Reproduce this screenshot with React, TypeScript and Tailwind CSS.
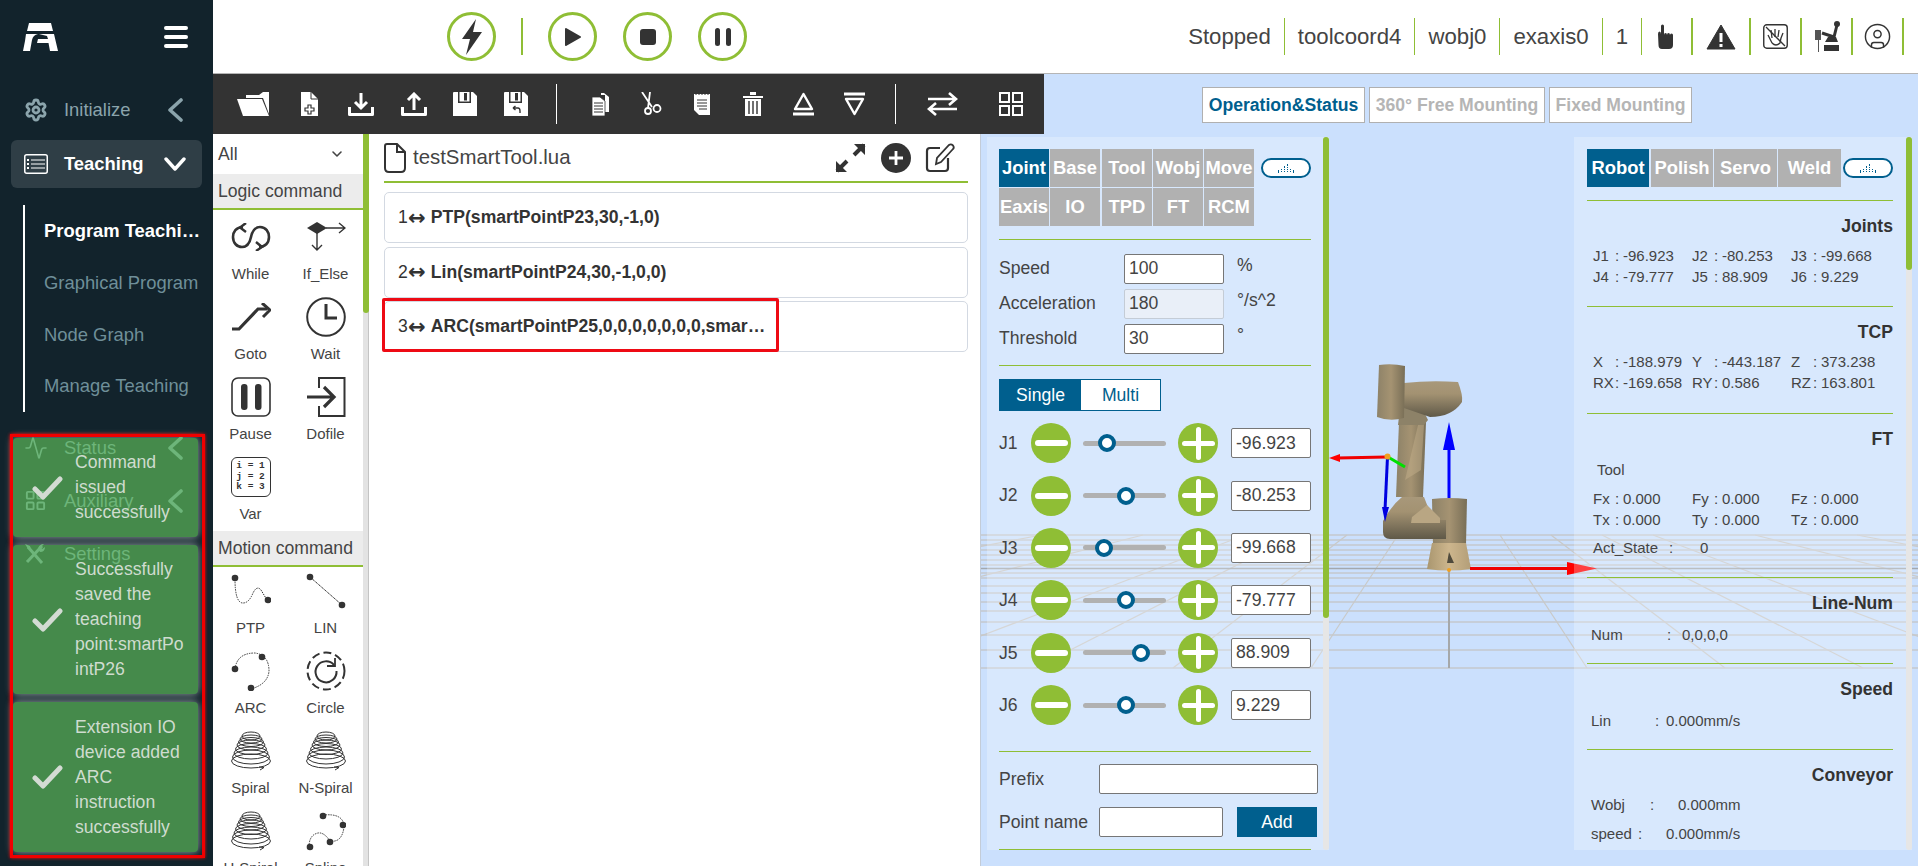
import React from "react";
import { Activity, ChevronDown, CircleUser, LayoutGrid, Settings } from "lucide-react";

const Svg = ({ w, h, box, children, className }: { w: number; h: number; box?: string; children: React.ReactNode; className?: string }) => (
  <svg width={w} height={h} viewBox={box ?? `0 0 ${w} ${h}`} className={className} fill="none">
    {children}
  </svg>
);

const ChevLeft = () => (
  <Svg w={16} h={24} className="mr-[30px]">
    <path d="M14 2 L3 12 L14 22" stroke="currentColor" strokeWidth="3.6" strokeLinecap="round" strokeLinejoin="round" />
  </Svg>
);

/* ---------- header ---------- */

const RoundBtn = ({ children }: { children: React.ReactNode }) => (
  <div className="w-[49px] h-[49px] rounded-full border-[3px] border-[#8fbe35] flex items-center justify-center">{children}</div>
);

const Stat = ({ children }: { children: React.ReactNode }) => (
  <div className="h-[37px] flex items-center px-[13px] border-r-[1.5px] border-[#8fbe35] text-[22.2px] text-[#444]">{children}</div>
);

const IconStat = ({ children, w }: { children: React.ReactNode; w: string }) => (
  <div className={`h-[37px] flex items-center justify-center border-r-2 border-[#8fbe35] ${w}`}>{children}</div>
);

const Header = () => (
  <div className="h-[74px] shrink-0 bg-white border-b border-[#b5b5b5] flex items-center">
    <div className="flex items-center ml-[234px]">
      <RoundBtn>
        <Svg w={26} h={38} box="0 0 26 38">
          <path d="M17 1 L3 21 H11 L7 37 L23 14 H14 Z" fill="#333" />
        </Svg>
      </RoundBtn>
      <div className="w-[2px] h-[37px] bg-[#8fbe35] mx-[25px]" />
      <div className="flex gap-[26px]">
        <RoundBtn>
          <Svg w={18} h={20}>
            <path d="M2 2 L16 10 L2 18 Z" fill="#333" stroke="#333" strokeWidth="2" strokeLinejoin="round" />
          </Svg>
        </RoundBtn>
        <RoundBtn>
          <div className="w-[16px] h-[16px] rounded-[3px] bg-[#333]" />
        </RoundBtn>
        <RoundBtn>
          <div className="flex gap-[6px]">
            <div className="w-[5px] h-[18px] rounded-full bg-[#333]" />
            <div className="w-[5px] h-[18px] rounded-full bg-[#333]" />
          </div>
        </RoundBtn>
      </div>
    </div>
    <div className="ml-auto mr-[14px] flex items-center">
      <Stat>Stopped</Stat>
      <Stat>toolcoord4</Stat>
      <Stat>wobj0</Stat>
      <Stat>exaxis0</Stat>
      <Stat>1</Stat>
      <IconStat w="w-[51px]">
        <Svg w={19} h={26}>
          <path d="M1 10 Q1 7.5 2.5 7.5 Q4 7.5 4 10 V2 Q4 0.5 5.5 0.5 Q7 0.5 7 2 V11 Q7 9 8.5 9 Q10 9 10 11 Q10 9 11.5 9 Q13 9 13 11 Q13 9.5 14.5 9.5 Q16 9.5 16 11 V21 Q16 25 12 25 H5 Q1.5 25 1.5 21 Z" fill="#333" />
        </Svg>
      </IconStat>
      <IconStat w="w-[58px]">
        <Svg w={30} h={26}>
          <path d="M15 1 L29 25 H1 Z" fill="#333" stroke="#333" strokeLinejoin="round" />
          <rect x="13.5" y="9" width="3" height="9" fill="#fff" />
          <rect x="13.5" y="20" width="3" height="3" fill="#fff" />
        </Svg>
      </IconStat>
      <IconStat w="w-[51px]">
        <Svg w={25} h={25}>
          <rect x="0.75" y="0.75" width="23.5" height="23.5" rx="3" stroke="#333" strokeWidth="1.4" />
          <path d="M9 19 L5 11 M9 14 L8 6 M12 13 V5 M15 13 L16 6 M18 14 L20 9 M9 19 Q13 23 17 19 L18 14" stroke="#333" strokeWidth="1.3" />
          <path d="M3 3 L22 22" stroke="#333" strokeWidth="1.3" />
        </Svg>
      </IconStat>
      <IconStat w="w-[51px]">
        <Svg w={26} h={34}>
          <path d="M1 10 h6 v10 h-2 v12 h-1 v-12 h-3 Z" fill="#555" />
          <path d="M8 13 L20 17 L23 5" stroke="#333" strokeWidth="3" />
          <circle cx="23" cy="4" r="3" fill="#333" />
          <path d="M11 22 H24 L22 17 H14 Z M10 25 H25 V31 H10 Z" fill="#333" />
        </Svg>
      </IconStat>
      <IconStat w="w-[51px]">
        <CircleUser size={29} strokeWidth={1.2} color="#333" />
      </IconStat>
    </div>
  </div>
);

/* ---------- sidebar ---------- */

const NavRow = ({ icon, label }: { icon: React.ReactNode; label: string }) => (
  <div className="h-[53px] flex items-center text-[18.4px]">
    <div className="w-[64px] pl-[24px] flex">{icon}</div>
    <span className="flex-1">{label}</span>
    <ChevLeft />
  </div>
);

const Sidebar = () => (
  <div className="w-[213px] shrink-0 bg-[#12232c] relative h-full">
    <div className="h-[74px] flex items-center justify-between pl-[23px] pr-[25px]">
      <Svg w={35} h={29} box="0 0 35 29">
        <path d="M6 0 H28 L30 8 H4 Z M3 11 H15 Q10 12 9 17 L7 28 H0 L2 18 Z M16 11 H31 L35 28 H27 L25.5 20 H14 L15 16 H25 L24 13 Z" fill="#fff" />
      </Svg>
      <div className="flex flex-col gap-[5px]">
        <div className="w-[24px] h-[4px] rounded-full bg-white" />
        <div className="w-[24px] h-[4px] rounded-full bg-white" />
        <div className="w-[24px] h-[4px] rounded-full bg-white" />
      </div>
    </div>
    <div className="h-[66px] pt-[6px] flex items-center text-[18.4px] text-[#8ba4ac]">
      <div className="w-[64px] pl-[24px] flex">
        <Settings size={24} strokeWidth={2.8} />
      </div>
      <span className="flex-1">Initialize</span>
      <ChevLeft />
    </div>
    <div className="mx-[11px] h-[48px] rounded-[6px] bg-[#2f3e46] flex items-center text-white font-bold text-[18.4px]">
      <div className="w-[53px] pl-[13px] flex">
        <Svg w={24} h={20}>
          <rect x="0.75" y="0.75" width="22.5" height="18.5" rx="2" stroke="#fff" strokeWidth="1.5" />
          <path d="M7 6 H21 M7 10 H21 M7 14 H21" stroke="#fff" strokeWidth="1" />
          <path d="M3 6 H5 M3 10 H5 M3 14 H5" stroke="#fff" strokeWidth="1.8" />
        </Svg>
      </div>
      <span className="flex-1">Teaching</span>
      <Svg w={22} h={14} className="mr-[16px]">
        <path d="M2 2 L11 12 L20 2" stroke="#fff" strokeWidth="3.4" strokeLinecap="round" strokeLinejoin="round" />
      </Svg>
    </div>
    <div className="ml-[23px] mt-[17px] h-[207px] border-l-2 border-white pl-[19px] text-[18.4px] text-[#6f8f99] flex flex-col">
      <div className="h-[51.75px] flex items-center font-bold text-white w-[159px]">
        <span className="truncate">Program Teaching</span>
      </div>
      <div className="h-[51.75px] flex items-center whitespace-nowrap">Graphical Program</div>
      <div className="h-[51.75px] flex items-center">Node Graph</div>
      <div className="h-[51.75px] flex items-center">Manage Teaching</div>
    </div>
    <div className="relative z-20 mt-[9px] text-[#6db57a]">
      <NavRow icon={<Activity size={24} strokeWidth={1.6} />} label="Status" />
      <NavRow icon={<LayoutGrid size={23} strokeWidth={2} />} label="Auxiliary" />
      <div className="h-[53px] flex items-center text-[18.4px]">
        <div className="w-[64px] pl-[24px] flex">
          <Svg w={22} h={22}>
            <path d="M4 4 L18 20 M18 3 L3 19" stroke="currentColor" strokeWidth="3" />
            <path d="M14 6 Q15 1 20 1 L17 4 L18 6 L21 4 Q21 9 16 9 Z M1 1 L6 3 L7 7 L4 6 Z" fill="currentColor" />
          </Svg>
        </div>
        <span>Settings</span>
      </div>
    </div>
  </div>
);

const toasts = [
  { h: "h-[99px]", text: "Command issued successfully" },
  { h: "h-[149px]", text: "Successfully saved the teaching point:smartPointP26" },
  { h: "h-[150px]", text: "Extension IO device added ARC instruction successfully" },
];

// green backing sits under the nav rows, the messages above them
const ToastBacks = () => (
  <div className="absolute left-[13px] top-[438px] w-[185px] z-10 flex flex-col gap-[8px]">
    {toasts.map((t) => (
      <div key={t.text} className={`${t.h} rounded-[4px] bg-[#458a4b] shadow-[0_0_8px_#9aa7a7]`} />
    ))}
  </div>
);

const ToastTexts = () => (
  <div className="absolute left-[13px] top-[438px] w-[185px] z-30 flex flex-col gap-[8px]">
    {toasts.map((t) => (
      <div key={t.text} className={`${t.h} flex items-center text-[17.6px] leading-[25px] text-[#cfdccf]`}>
        <div className="w-[62px] shrink-0 pl-[19px]">
          <Svg w={31} h={24}>
            <path d="M3 13 L11 21 L28 3" stroke="#d3dbd3" strokeWidth="5" strokeLinecap="round" strokeLinejoin="round" />
          </Svg>
        </div>
        <div className="w-[110px] [overflow-wrap:anywhere]">{t.text}</div>
      </div>
    ))}
  </div>
);

/* ---------- toolbar ---------- */

const Toolbar = () => (
  <div className="w-[831px] h-[60px] shrink-0 bg-[#333] flex items-center pl-[24px]">
    <Svg w={33} h={24}>
      <path d="M9 5 L9 3 H22 L26 0 H32 V22 L26 6 H9" fill="#fff" />
      <path d="M0 7 H25 L32 24 H6 Z" fill="#fff" />
    </Svg>
    <Svg w={19} h={24} className="ml-[30px]">
      <path d="M1 0 H11 L18 7 V24 H1 Z" fill="#fff" />
      <path d="M11 0 V7 H18" stroke="#333" />
      <path d="M8 13 H11 V16 H14 V19 H11 V22 H8 V19 H5 V16 H8 Z" stroke="#333" strokeWidth="1.2" />
    </Svg>
    <Svg w={26} h={24} className="ml-[29px]">
      <path d="M1.5 15 V22.5 H24.5 V15" stroke="#fff" strokeWidth="3" strokeLinejoin="round" />
      <path d="M13 1 V15 M7 10 L13 16 L19 10" stroke="#fff" strokeWidth="3" />
    </Svg>
    <Svg w={26} h={24} className="ml-[27px]">
      <path d="M1.5 15 V22.5 H24.5 V15" stroke="#fff" strokeWidth="3" strokeLinejoin="round" />
      <path d="M13 18 V3 M7 8 L13 2 L19 8" stroke="#fff" strokeWidth="3" />
    </Svg>
    <Svg w={24} h={24} className="ml-[26px]">
      <path d="M0 1 Q0 0 1 0 H20 L24 4 V24 H0 Z" fill="#fff" />
      <rect x="5" y="0" width="13" height="11" fill="#333" />
      <rect x="6.5" y="0" width="10" height="9.5" fill="#fff" />
      <rect x="11" y="1" width="3" height="7.5" fill="#333" />
    </Svg>
    <Svg w={24} h={24} className="ml-[27px]">
      <path d="M0 1 Q0 0 1 0 H20 L24 4 V24 H0 Z" fill="#fff" />
      <rect x="5" y="0" width="13" height="11" fill="#333" />
      <rect x="6.5" y="0" width="10" height="9.5" fill="#fff" />
      <rect x="11" y="1" width="3" height="7.5" fill="#333" />
      <path d="M9 16 H14 Q16 16 16 19 V21 M9 16 L11.5 14 M9 16 L11.5 18" stroke="#333" strokeWidth="1.4" />
    </Svg>
    <div className="w-[1px] h-[40px] bg-white ml-[28px]" />
    <Svg w={19} h={24} className="ml-[34px]">
      <path d="M5 3 H10 V1 H13 L18 5 V20 H14 V3" fill="#fff" />
      <path d="M1 5 H9 L14 9 V24 H1 Z" fill="#fff" stroke="#333" strokeWidth="0.8" />
      <path d="M3 11 H12 M3 14 H12 M3 17 H12 M3 20 H12" stroke="#333" strokeWidth="1" />
    </Svg>
    <Svg w={22} h={24} className="ml-[30px]">
      <path d="M2 0 L12 15 M10 0 L8 16" stroke="#fff" strokeWidth="1.8" />
      <circle cx="8" cy="19" r="3" stroke="#fff" strokeWidth="1.8" />
      <circle cx="17" cy="16.5" r="3.5" stroke="#fff" strokeWidth="1.8" />
    </Svg>
    <Svg w={18} h={24} className="ml-[31px]">
      <path d="M1 2 H17 V23 H6 L1 18 Z" fill="#fff" />
      <path d="M3 0 V3 M6 0 V3 M9 0 V3 M12 0 V3 M15 0 V3" stroke="#333" />
      <path d="M4 8 H14 M4 11 H14 M4 14 H14 M6 17 H14" stroke="#333" />
    </Svg>
    <Svg w={20} h={24} className="ml-[32px]">
      <path d="M0 4 H20 V6 H0 Z M7 0 H13 V3 H7 Z" fill="#fff" />
      <path d="M2 7 H18 V24 H2 Z" fill="#fff" />
      <path d="M6 9 V22 M10 9 V22 M14 9 V22" stroke="#333" strokeWidth="1.4" />
    </Svg>
    <Svg w={21} h={24} className="ml-[30px]">
      <path d="M10.5 2 L19 17 H2 Z" stroke="#fff" strokeWidth="2.4" strokeLinejoin="round" />
      <path d="M0 22 H21" stroke="#fff" strokeWidth="3" />
    </Svg>
    <Svg w={21} h={24} className="ml-[30px]">
      <path d="M10.5 22 L19 7 H2 Z" stroke="#fff" strokeWidth="2.4" strokeLinejoin="round" />
      <path d="M0 2 H21" stroke="#fff" strokeWidth="3" />
    </Svg>
    <div className="w-[1px] h-[40px] bg-white ml-[30px]" />
    <Svg w={31} h={24} className="ml-[31px]">
      <path d="M1 7 H29 M22 1 L29 7 L22 13" stroke="#fff" strokeWidth="2.6" />
      <path d="M30 17 H2 M9 11 L2 17 L9 23" stroke="#fff" strokeWidth="2.6" />
    </Svg>
    <Svg w={24} h={24} className="ml-[41px]">
      <rect x="1" y="1" width="9" height="9" stroke="#fff" strokeWidth="2" />
      <rect x="14" y="1" width="9" height="9" stroke="#fff" strokeWidth="2" />
      <rect x="1" y="14" width="9" height="9" stroke="#fff" strokeWidth="2" />
      <rect x="14" y="14" width="9" height="9" stroke="#fff" strokeWidth="2" />
    </Svg>
  </div>
);

/* ---------- command palette ---------- */

const Spiral = () => (
  <Svg w={40} h={40}>
    {[[20, 5, 9, 4], [20, 8, 11, 4], [20, 11, 12.5, 4.5], [20, 14, 14, 5], [20, 18, 15.5, 5.5], [20, 22, 17, 6], [20, 26, 18.5, 7], [20, 30, 19.5, 7]].map(([cx, cy, rx, ry]) => (
      <ellipse key={cy} cx={cx} cy={cy} rx={rx} ry={ry} stroke="#333" strokeWidth="1" />
    ))}
    <path d="M28 36 L33 36.5 L29 39" stroke="#333" />
  </Svg>
);

const PaletteItem = ({ label, icon }: { label: string; icon: React.ReactNode }) => (
  <div className="h-[80px] flex flex-col items-center">
    <div className="h-[40px] flex items-center justify-center">{icon}</div>
    <div className="mt-[7px] text-[15px] leading-[20px] text-[#444]">{label}</div>
  </div>
);

const PaletteHead = ({ children }: { children: string }) => (
  <div className="h-[36px] bg-[#ececec] border-b-2 border-[#8fbe35] pl-[5px] flex items-center text-[17.6px] text-[#444]">{children}</div>
);

const logicItems = [
  {
    label: "While",
    icon: (
      <Svg w={40} h={28}>
        <path d="M12 4 C5 4 2 9 2 14 C2 20 6 24 11 24 C17 24 19 19 20 14 C21 9 24 4 29 4 C35 4 38 9 38 14 C38 20 34 24 28 24" stroke="#333" strokeWidth="2.6" />
        <path d="M15 0 L9 4.5 L15 9 M25 19 L31 24 L25 28" stroke="#333" strokeWidth="2.4" />
      </Svg>
    ),
  },
  {
    label: "If_Else",
    icon: (
      <Svg w={40} h={30}>
        <path d="M11 0 L21 6 L11 12 L1 6 Z" fill="#333" />
        <path d="M20 6 H39 M33 1 L39 6 L33 11 M11 11 V28 M6 23 L11 28 L16 23" stroke="#333" strokeWidth="1.4" />
      </Svg>
    ),
  },
  {
    label: "Goto",
    icon: (
      <Svg w={40} h={28}>
        <path d="M1 26 H8 L27 6 H36" stroke="#333" strokeWidth="3.2" />
        <path d="M31 0 L39 7 L32 14" stroke="#333" strokeWidth="3" />
      </Svg>
    ),
  },
  {
    label: "Wait",
    icon: (
      <Svg w={40} h={40}>
        <circle cx="20" cy="20" r="18.8" stroke="#333" strokeWidth="2" />
        <path d="M20 7 V21 H31" stroke="#333" strokeWidth="3" />
      </Svg>
    ),
  },
  {
    label: "Pause",
    icon: (
      <Svg w={40} h={40}>
        <rect x="1" y="1" width="38" height="38" rx="6" stroke="#333" strokeWidth="1.6" />
        <rect x="10" y="7" width="6.5" height="26" rx="3" fill="#333" />
        <rect x="24" y="7" width="6.5" height="26" rx="3" fill="#333" />
      </Svg>
    ),
  },
  {
    label: "Dofile",
    icon: (
      <Svg w={40} h={40}>
        <path d="M13 11 V1 H38.5 V39 H13 V29" stroke="#333" strokeWidth="2" />
        <path d="M1 20 H27 M18 10 L28 20 L18 30" stroke="#333" strokeWidth="3.2" />
      </Svg>
    ),
  },
  {
    label: "Var",
    icon: (
      <div className="w-[40px] h-[40px] rounded-[6px] border-[1.5px] border-[#333] flex flex-col items-center justify-center font-['Liberation_Mono',monospace] font-bold text-[9.5px] leading-[10.5px] text-[#333] whitespace-pre">
        <span>i = 1</span>
        <span>j = 2</span>
        <span>k = 3</span>
      </div>
    ),
  },
];

const motionItems = [
  {
    label: "PTP",
    icon: (
      <Svg w={40} h={36}>
        <path d="M4 6 Q4 30 12 30 Q18 30 22 20 Q26 12 30 17 L36 27" stroke="#333" strokeDasharray="1.5 1" />
        <circle cx="4" cy="5" r="3.3" fill="#333" />
        <circle cx="37" cy="27" r="3.3" fill="#333" />
      </Svg>
    ),
  },
  {
    label: "LIN",
    icon: (
      <Svg w={40} h={36}>
        <path d="M4 4 L36 32" stroke="#333" strokeDasharray="1.5 0.5" />
        <circle cx="4" cy="4" r="3.3" fill="#333" />
        <circle cx="36" cy="32" r="3.3" fill="#333" />
      </Svg>
    ),
  },
  {
    label: "ARC",
    icon: (
      <Svg w={40} h={40}>
        <path d="M4 18 Q6 2 24 2 Q38 4 38 20 Q37 33 20 38" stroke="#333" strokeDasharray="1.5 1" />
        <circle cx="4" cy="18" r="3.3" fill="#333" />
        <circle cx="31" cy="6" r="3.3" fill="#333" />
        <circle cx="20" cy="37" r="3.3" fill="#333" />
      </Svg>
    ),
  },
  {
    label: "Circle",
    icon: (
      <Svg w={40} h={40}>
        <circle cx="20" cy="20" r="18.5" stroke="#333" strokeWidth="2" strokeDasharray="8 4" />
        <path d="M28 14 A10.5 10.5 0 1 0 30.5 20" stroke="#333" strokeWidth="2" />
        <path d="M29 7 V15 H21" stroke="#333" strokeWidth="1.8" />
      </Svg>
    ),
  },
  { label: "Spiral", icon: <Spiral /> },
  { label: "N-Spiral", icon: <Spiral /> },
  { label: "H-Spiral", icon: <Spiral /> },
  {
    label: "Spline",
    icon: (
      <Svg w={40} h={40}>
        <path d="M3 36 Q3 24 12 22 Q18 21 24 30 Q36 32 38 16 Q38 2 17 4" stroke="#333" strokeDasharray="1.5 1" />
        <circle cx="4" cy="36" r="3.3" fill="#333" />
        <circle cx="24" cy="31" r="3.3" fill="#333" />
        <circle cx="37" cy="14" r="3.3" fill="#333" />
        <circle cx="17" cy="5" r="3.3" fill="#333" />
      </Svg>
    ),
  },
];

const Palette = () => (
  <div className="w-[158px] shrink-0 bg-white h-full relative overflow-hidden">
    <div className="w-[150px]">
      <div className="h-[40px] pl-[5px] pr-[18px] flex items-center justify-between text-[17.6px] text-[#444]">
        <span>All</span>
        <ChevronDown size={16} strokeWidth={2.4} />
      </div>
      <PaletteHead>Logic command</PaletteHead>
      <div className="grid grid-cols-2 pt-[7px] -mb-[6px]">
        {logicItems.map((i) => (
          <PaletteItem key={i.label} {...i} />
        ))}
      </div>
      <div className="relative">
        <PaletteHead>Motion command</PaletteHead>
      </div>
      <div className="grid grid-cols-2 pt-[4px]">
        {motionItems.map((i) => (
          <PaletteItem key={i.label} {...i} />
        ))}
      </div>
    </div>
    <div className="absolute right-[2px] top-0 bottom-0 w-[6px] bg-[#e3e3e3] border-r border-[#c4c4c4]">
      <div className="w-[6px] h-[179px] rounded-b-[3px] bg-[#8fbe35]" />
    </div>
  </div>
);

/* ---------- editor ---------- */

const commands = [
  { n: 1, text: "PTP(smartPointP23,30,-1,0)" },
  { n: 2, text: "Lin(smartPointP24,30,-1,0,0)" },
  { n: 3, text: "ARC(smartPointP25,0,0,0,0,0,0,0,smartPointP26,0,0,0,0,0,0,0,30,-1,0)" },
];

const CommandRow = ({ n, text, selected }: { n: number; text: string; selected?: boolean }) => (
  <div className="relative h-[51px] rounded-[5px] border border-[#d3d9e2] flex items-center pl-[13px] text-[17.6px] text-[#333]">
    <span>{n}</span>
    <span className="w-[18px] text-center font-['DejaVu_Sans',sans-serif] font-bold text-[21px] leading-[20px]">↔</span>
    <span className={`font-bold ml-[5px] truncate ${selected ? "w-[336px]" : ""}`}>{text}</span>
    {selected && <div className="absolute left-[-3px] top-[-4px] w-[397px] h-[54px] rounded-[2px] border-[3px] border-[#ee0a14]" />}
  </div>
);

const Editor = () => (
  <div className="w-[610px] shrink-0 bg-white h-full pl-[13px] pr-[12px] pt-[9px] border-r border-[#c3ccd8]">
    <div className="h-[40px] flex items-start border-b-[2px] border-[#8fbe35] mb-[9px]">
      <Svg w={22} h={30} className="shrink-0">
        <path d="M3 1 H13 L21 9 V25 Q21 29 17 29 H5 Q1 29 1 25 V3 Q1 1 3 1 Z M13 1 V9 H21" stroke="#333" strokeWidth="2" />
      </Svg>
      <span className="ml-[7px] text-[20.4px] leading-[28px] text-[#444]">testSmartTool.lua</span>
      <div className="ml-auto flex items-center pr-[13px]">
        <Svg w={31} h={30}>
          <path d="M29 2 L19 12 M2 28 L12 18" stroke="#333" strokeWidth="4" />
          <path d="M19 1 H30 V12 Z M1 18 V29 H12 Z" fill="#333" />
        </Svg>
        <Svg w={30} h={30} className="ml-[15px]">
          <circle cx="15" cy="15" r="15" fill="#333" />
          <path d="M15 8 V22 M8 15 H22" stroke="#fff" strokeWidth="2.8" />
        </Svg>
        <Svg w={30} h={30} className="ml-[14px]">
          <path d="M15 5 H5 Q2 5 2 8 V25 Q2 28 5 28 H20 Q23 28 23 25 V15" stroke="#333" strokeWidth="2.2" />
          <path d="M11 21 L12 15 L24 2 Q26 0.5 28 2.5 Q29.5 4.5 28 6 L16 19 Z" stroke="#333" strokeWidth="1.8" />
        </Svg>
      </div>
    </div>
    <div className="flex flex-col gap-[3.5px]">
      {commands.map((c) => (
        <CommandRow key={c.n} n={c.n} text={c.text} selected={c.n === 3} />
      ))}
    </div>
  </div>
);

/* ---------- controls ---------- */

const Tab = ({ label, active, w }: { label: string; active?: boolean; w: string }) => (
  <div className={`${w} h-[38px] flex items-center justify-center font-bold text-[18.4px] whitespace-nowrap text-white ${active ? "bg-[#005f8e]" : "bg-[#b1b1b1]"}`}>{label}</div>
);

const Pill = () => (
  <div className="w-[50px] h-[20px] rounded-full border-2 border-[#005f8e] bg-white flex items-end justify-center pb-[4px] gap-[1.5px]">
    {[1, 2, 4, 5, 2, 1].map((n, i) => (
      <div key={i} className="w-[1.5px] border-l-[1.5px] border-dotted border-[#005f8e]" style={{ height: n * 1.6 }} />
    ))}
  </div>
);

const Field = ({ value, w, disabled }: { value?: string; w: string; disabled?: boolean }) => (
  <input
    readOnly
    value={value ?? ""}
    className={`${w} h-[30px] shrink-0 rounded-[2px] border pl-[4px] text-[17.6px] text-[#444] outline-none ${disabled ? "bg-[#e9eff8] border-[#c4ccd6]" : "bg-white border-[#767676]"}`}
  />
);

const joints = [
  { name: "J1", value: "-96.923", pos: 29 },
  { name: "J2", value: "-80.253", pos: 52 },
  { name: "J3", value: "-99.668", pos: 25 },
  { name: "J4", value: "-79.777", pos: 52 },
  { name: "J5", value: "88.909", pos: 70 },
  { name: "J6", value: "9.229", pos: 52 },
];

const JointRow = ({ name, value, pos }: { name: string; value: string; pos: number }) => (
  <div className="h-[52.4px] flex items-center">
    <span className="w-[32px] text-[17.6px] text-[#444]">{name}</span>
    <div className="w-[40px] h-[40px] rounded-full bg-[#8fbe35] flex items-center justify-center">
      <div className="w-[33px] h-[6px] rounded-full bg-white" />
    </div>
    <div className="relative w-[83px] h-[5px] mx-[12px] rounded-full bg-[#b1b1b1]">
      <div className="absolute top-[-6.5px] w-[18px] h-[18px] -ml-[9px] rounded-full bg-white border-[4px] border-[#005f8e]" style={{ left: `${pos}%` }} />
    </div>
    <div className="relative w-[40px] h-[40px] rounded-full bg-[#8fbe35] flex items-center justify-center">
      <div className="w-[33px] h-[5px] rounded-full bg-white" />
      <div className="absolute w-[5px] h-[33px] rounded-full bg-white" />
    </div>
    <Field value={value} w="w-[80px] ml-[13px]" />
  </div>
);

const ParamRow = ({ label, value, unit, disabled }: { label: string; value: string; unit: string; disabled?: boolean }) => (
  <div className="h-[35px] flex items-center text-[17.6px] text-[#444]">
    <span className="w-[125px]">{label}</span>
    <Field value={value} w="w-[100px]" disabled={disabled} />
    <span className="ml-[13px] self-start mt-[1px]">{unit}</span>
  </div>
);

const LeftPanel = () => (
  <div className="w-[342px] h-[713px] shrink-0 ml-[6px] bg-white/25 relative pl-[12px] pt-[12px] overflow-hidden">
    <div className="w-[312px]">
      <div className="flex">
        <div className="grid grid-cols-[51px_52px_51px_51px_50px] gap-y-[1px] w-[255px]">
          <Tab label="Joint" active w="w-[50px]" />
          <Tab label="Base" w="w-[50px]" />
          <Tab label="Tool" w="w-[50px]" />
          <Tab label="Wobj" w="w-[50px]" />
          <Tab label="Move" w="w-[50px]" />
          <Tab label="Eaxis" w="w-[50px]" />
          <Tab label="IO" w="w-[50px]" />
          <Tab label="TPD" w="w-[50px]" />
          <Tab label="FT" w="w-[50px]" />
          <Tab label="RCM" w="w-[50px]" />
        </div>
        <div className="ml-auto mt-[9px]">
          <Pill />
        </div>
      </div>
      <div className="mt-[13px] border-t border-[#8fbe35] pt-[11px] pb-[9px]">
        <ParamRow label="Speed" value="100" unit="%" />
        <ParamRow label="Acceleration" value="180" unit="°/s^2" disabled />
        <ParamRow label="Threshold" value="30" unit="°" />
      </div>
      <div className="border-t border-[#8fbe35] pt-[13px]">
        <div className="flex w-[162px] h-[32px] border border-[#005f8e] text-[17.6px]">
          <div className="w-[81px] bg-[#005f8e] text-white flex items-center justify-center">Single</div>
          <div className="flex-1 bg-white text-[#005f8e] flex items-center justify-center">Multi</div>
        </div>
        <div className="mt-[6px]">
          {joints.map((j) => (
            <JointRow key={j.name} {...j} />
          ))}
        </div>
      </div>
      <div className="mt-[20px] border-t border-[#8fbe35] pt-[12px] text-[17.6px] text-[#444]">
        <div className="flex items-center w-[320px]">
          <span className="w-[100px] shrink-0">Prefix</span>
          <Field w="w-[219px]" />
        </div>
        <div className="flex items-center w-[320px] mt-[13px] pb-[12px]">
          <span className="w-[100px] shrink-0">Point name</span>
          <Field w="w-[124px]" />
          <div className="w-[80px] h-[30px] ml-[14px] bg-[#005f8e] text-white flex items-center justify-center">Add</div>
        </div>
      </div>
      <div className="border-t border-[#8fbe35]" />
    </div>
    <div className="absolute right-0 top-0 bottom-0 w-[6px] rounded-full bg-[#e6e6e6]">
      <div className="w-[6px] h-[481px] rounded-full bg-[#8fbe35]" />
    </div>
  </div>
);

/* ---------- status readout ---------- */

const Title = ({ children }: { children: string }) => <div className="h-[22px] leading-[22px] text-right font-bold text-[17.6px] text-[#333]">{children}</div>;

const Cell = ({ k, v }: { k: string; v: string }) => (
  <div className="flex h-[21.5px] items-center whitespace-nowrap">
    <span className="w-[22px] shrink-0">{k}</span>
    <span className="w-[8px] shrink-0">:</span>
    <span>{v}</span>
  </div>
);

const CellGrid = ({ rows }: { rows: string[][] }) => (
  <div className="grid grid-cols-[99px_99px_99px] pl-[6px]">
    {rows.flat().map((c) => {
      const [k, v] = c.split("|");
      return <Cell key={k} k={k} v={v} />;
    })}
  </div>
);

const RightPanel = () => (
  <div className="w-[338px] h-[713px] shrink-0 bg-white/25 relative pl-[13px] pt-[12px] overflow-hidden text-[15px] text-[#444]">
    <div className="w-[306px]">
      <div className="flex h-[38px]">
        <Tab label="Robot" active w="w-[62px]" />
        <Tab label="Polish" w="w-[62px] ml-[2px]" />
        <Tab label="Servo" w="w-[63px] ml-[1px]" />
        <Tab label="Weld" w="w-[63px] ml-[1px]" />
        <div className="ml-auto mt-[9px]">
          <Pill />
        </div>
      </div>
      <div className="mt-[13px] h-[107px] border-y border-[#8fbe35] pt-[14px]">
        <Title>Joints</Title>
        <div className="mt-[8px]">
          <CellGrid rows={[["J1|-96.923", "J2|-80.253", "J3|-99.668"], ["J4|-79.777", "J5|88.909", "J6|9.229"]]} />
        </div>
      </div>
      <div className="h-[107px] border-b border-[#8fbe35] pt-[14px]">
        <Title>TCP</Title>
        <div className="mt-[8px]">
          <CellGrid rows={[["X|-188.979", "Y|-443.187", "Z|373.238"], ["RX|-169.658", "RY|0.586", "RZ|163.801"]]} />
        </div>
      </div>
      <div className="h-[164px] border-b border-[#8fbe35] pt-[14px]">
        <Title>FT</Title>
        <div className="pl-[10px] mt-[9px] h-[22px] leading-[22px]">Tool</div>
        <div className="mt-[7px]">
          <CellGrid rows={[["Fx|0.000", "Fy|0.000", "Fz|0.000"], ["Tx|0.000", "Ty|0.000", "Tz|0.000"]]} />
        </div>
        <div className="flex pl-[6px] mt-[6px] h-[22px] leading-[22px]">
          <span className="w-[76px]">Act_State</span>
          <span className="w-[31px]">:</span>
          <span>0</span>
        </div>
      </div>
      <div className="h-[86px] border-b border-[#8fbe35] pt-[14px]">
        <Title>Line-Num</Title>
        <div className="flex pl-[4px] mt-[10px] h-[22px] leading-[22px]">
          <span className="w-[76px]">Num</span>
          <span className="w-[15px]">:</span>
          <span>0,0,0,0</span>
        </div>
      </div>
      <div className="h-[86px] border-b border-[#8fbe35] pt-[14px]">
        <Title>Speed</Title>
        <div className="flex pl-[4px] mt-[10px] h-[22px] leading-[22px]">
          <span className="w-[64px]">Lin</span>
          <span className="w-[11px]">:</span>
          <span>0.000mm/s</span>
        </div>
      </div>
      <div className="pt-[14px]">
        <Title>Conveyor</Title>
        <div className="flex pl-[4px] mt-[8px] h-[22px] leading-[22px]">
          <span className="w-[59px]">Wobj</span>
          <span className="w-[28px]">:</span>
          <span>0.000mm</span>
        </div>
        <div className="flex pl-[4px] mt-[7px] h-[22px] leading-[22px]">
          <span className="w-[47px]">speed</span>
          <span className="w-[28px]">:</span>
          <span>0.000mm/s</span>
        </div>
      </div>
    </div>
    <div className="absolute right-0 top-0 bottom-0 w-[6px] rounded-full bg-[#e6e6e6]">
      <div className="w-[6px] h-[133px] rounded-full bg-[#8fbe35]" />
    </div>
  </div>
);

/* ---------- 3D scene, page coordinates in the viewBox ---------- */

const floorY = [535, 540, 545, 550, 555, 560, 565, 573, 578, 586, 593, 602, 611, 622, 635, 650, 668];
const fan = [-12, -10, -8, -6, -4, -3, -2, -1, 1, 2, 3, 4, 6, 8, 10, 12];

const Scene = () => (
  <svg className="absolute left-[768px] top-0" width={937} height={792} viewBox="981 74 937 792">
    <defs>
      <linearGradient id="tanV" x1="0" y1="0" x2="0" y2="1">
        <stop offset="0" stopColor="#a8987a" />
        <stop offset="0.35" stopColor="#a39272" />
        <stop offset="1" stopColor="#5f5948" />
      </linearGradient>
      <linearGradient id="tanH" x1="0" y1="0" x2="1" y2="0">
        <stop offset="0" stopColor="#8d8268" />
        <stop offset="0.5" stopColor="#a59372" />
        <stop offset="1" stopColor="#786e56" />
      </linearGradient>
      <linearGradient id="tanB" x1="0" y1="0" x2="1" y2="0">
        <stop offset="0" stopColor="#a9966f" />
        <stop offset="0.5" stopColor="#cdb68d" />
        <stop offset="1" stopColor="#b39e78" />
      </linearGradient>
    </defs>
    {floorY.map((y) => (
      <line key={y} x1="981" x2="1918" y1={y} y2={y} stroke="#c4c8cc" strokeWidth="1.6" />
    ))}
    {fan.map((k) => (
      <line key={k} x1={1449 + k * 51} y1="535" x2={1449 + k * 138} y2="668" stroke="#c9c9c8" strokeWidth="1.2" />
    ))}
    <line x1="981" x2="1918" y1="568.5" y2="568.5" stroke="#a3a8ae" strokeWidth="1.4" />
    <line x1="1449" x2="1449" y1="568" y2="668" stroke="#a5a8aa" strokeWidth="2" />

    {/* robot */}
    <path d="M1432 499 Q1449 497 1467 499 L1466 545 L1433 545 Z" fill="url(#tanH)" />
    <path d="M1432 543 H1466 L1471 569 Q1449 572 1427 569 Z" fill="url(#tanB)" />
    <path d="M1449 552 L1454 563 H1447 Z" fill="#4f4a3c" />
    <path d="M1383 521 Q1392 505 1402 497 H1424 L1433 520 H1446 V539 H1390 Q1383 539 1383 532 Z" fill="url(#tanV)" />
    <path d="M1412 517 L1427 505 L1440 518 L1440 523 L1411 523 Z" fill="#b9a683" />
    <path d="M1399 422 H1426 L1423 497 H1396 Z" fill="url(#tanH)" />
    <path d="M1405 480 L1418 425 L1424 425 L1421 470 Z" fill="#c2ae89" opacity="0.5" />
    <path d="M1400 408 H1422 L1428 420 L1424 425 H1398 Z" fill="#8d8268" />
    <path d="M1404 383 Q1430 380 1458 382 Q1463 395 1462 402 Q1452 417 1430 417 L1404 408 Z" fill="url(#tanV)" />
    <path d="M1379 365 Q1392 363 1405 366 L1404 418 Q1390 422 1377 417 Z" fill="url(#tanH)" />

    {/* axes */}
    <path d="M1449 498 V450" stroke="#0000ff" strokeWidth="3" />
    <path d="M1449 422 L1455 450 H1443 Z" fill="#0000ff" />
    <path d="M1470 568.5 H1570" stroke="#f00000" strokeWidth="3" />
    <path d="M1567 562 L1597 568.5 L1567 575 Z" fill="#ff0000" />
    <path d="M1387 457 L1337 458" stroke="#f00000" strokeWidth="3" />
    <path d="M1329 458 L1340 454 V462 Z" fill="#ff0000" />
    <path d="M1387.5 457 L1385 510" stroke="#0000e0" strokeWidth="3" />
    <path d="M1382 507 L1389 507 L1385 522 Z" fill="#0000e0" />
    <path d="M1388 457 L1405 467" stroke="#00e000" strokeWidth="3" />
    <circle cx="1387.5" cy="456.5" r="3" fill="#f0a020" />
    <circle cx="1449" cy="570" r="2" fill="#f0a020" />
  </svg>
);

/* ---------- page ---------- */

const App = () => (
  <div className="relative w-screen h-screen overflow-hidden flex bg-white font-['Liberation_Sans',Arial,sans-serif]">
    <Sidebar />
    <ToastBacks />
    <ToastTexts />
    <div className="absolute left-[10px] top-[434px] w-[195px] h-[424px] z-30 border-[3px] border-[#f00000] shadow-[0_0_3px_#f00]" />
    <div className="flex-1 flex flex-col min-w-0">
      <Header />
      <div className="relative flex-1 bg-[#cbe0fd] flex flex-col min-h-0">
        <Scene />
        <div className="relative z-10 flex h-[60px]">
          <Toolbar />
          <div className="flex gap-[4px] ml-[158px] mt-[13px] h-[36px] text-[17.6px] font-bold text-[#b5b5b5]">
            <div className="w-[163px] bg-white border border-[#b0b0b0] flex items-center justify-center text-[#005f8e]">Operation&amp;Status</div>
            <div className="w-[176px] bg-white border border-[#b0b0b0] flex items-center justify-center whitespace-nowrap">360° Free Mounting</div>
            <div className="w-[143px] bg-white border border-[#b0b0b0] flex items-center justify-center whitespace-nowrap">Fixed Mounting</div>
          </div>
        </div>
        <div className="relative z-10 flex-1 flex min-h-0">
          <Palette />
          <Editor />
          <div className="flex-1 flex items-start justify-between pt-[3px] pr-[6px]">
            <LeftPanel />
            <RightPanel />
          </div>
        </div>
      </div>
    </div>
  </div>
);

export default App;
